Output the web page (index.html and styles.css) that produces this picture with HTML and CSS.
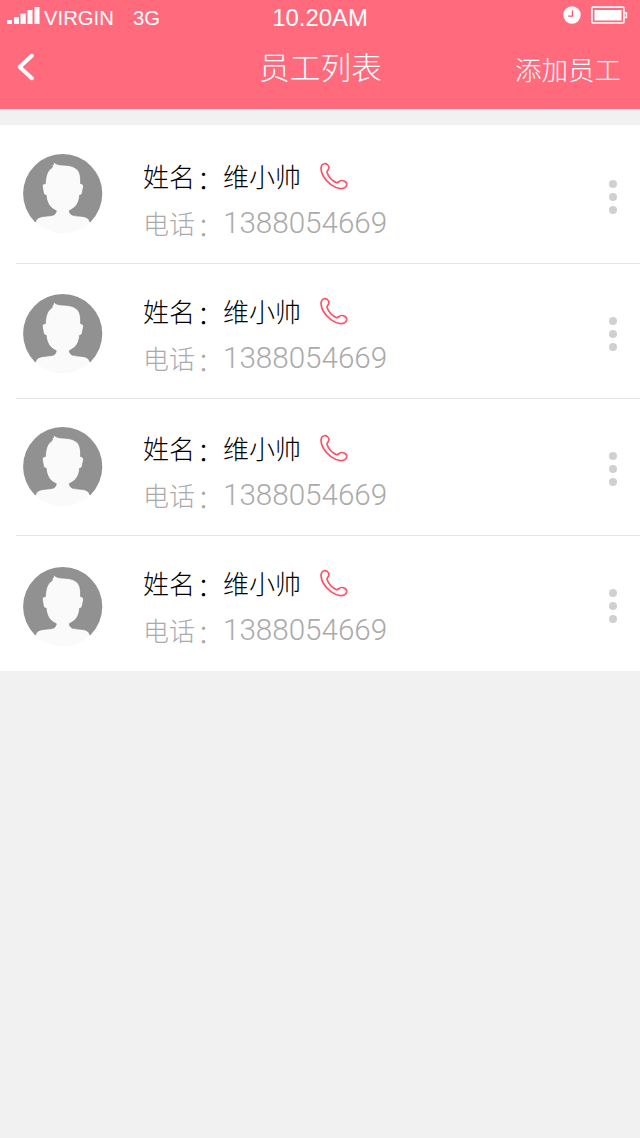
FILE: index.html
```html
<!DOCTYPE html>
<html lang="zh-CN">
<head>
<meta charset="utf-8">
<title>员工列表</title>
<link rel="stylesheet" href="styles.css">
</head>
<body>
<svg class="symbols" width="0" height="0">
  <clipPath id="disc"><circle cx="39.7" cy="39.7" r="39.6"/></clipPath>
  <symbol id="avatar" viewBox="0 0 80 80">
    <circle cx="39.7" cy="39.7" r="39.6" fill="#fafafa"/>
    <path clip-path="url(#disc)" fill="#919191" stroke="#848484" stroke-width=".7" d="M12.500 68L-5 80V-5H85V80L67 68C66 64.500 64 63.300 60 62.500C53 61.700 49 62 47.300 59.500C46.700 58.500 46.300 57.500 46.300 56.700C53.500 53.500 56.300 48 56.600 41.300C58.500 41.300 59.300 40 59.500 37.500L60.500 33C60.700 31 59.500 29.800 57.500 29.500C58 23 57 16.500 52.500 14.200C48 11 42 11.500 37 10.800C34.500 10.500 32 9.500 30.700 7.800L30.200 11L28.700 10.500L29.500 13L27.700 14.800C24.200 17 22.600 23 22.400 29.500C20 29.800 18.900 31 19.400 33L20.200 37.500C20.500 40 21.200 41.300 23.200 41.300C23.500 48 26.500 54 33.200 56.700C33.200 57.500 33 58.500 32.300 59.500C31 62 26 61.700 20 62.500C15.500 63.300 13.500 64.500 12.500 68Z"/>
  </symbol>
  <symbol id="phone" viewBox="0 0 28 28">
    <path fill="none" stroke="#ff5068" stroke-width="1.700" stroke-linejoin="round" d="M4 1.800C6 1 8.700 3 9 5.500C9.100 7.700 6.700 8.500 7 10.500C8.500 14.500 12.500 19 16.500 20.700C18.500 21 19 18.700 21.300 18.500C24.500 18.400 27 20.500 26.800 22.700C26.300 25.300 23.500 26.800 20.500 26.600C14 26 7 20.500 3.500 14.500C1.500 11 .8 7.500 1.200 5C1.600 3.200 2.500 2.200 4 1.800Z"/>
  </symbol>
</svg>
<header class="header">
  <div class="status">
    <div class="carrier">
      <svg class="signal" width="33" height="18" viewBox="0 0 33 18" fill="#fff"><path d="M0 14h5v4H0zM7 11h5v7H7zM13.500 7.500h5.200V18h-5.200zM20.500 4h5v14h-5zM27.500 1h5v17h-5z"/></svg>
      <span class="operator">VIRGIN</span><span class="network">3G</span>
    </div>
    <div class="time">10.20AM</div>
    <div class="indicators">
      <svg width="18" height="18" viewBox="0 0 18 18"><circle cx="9" cy="9" r="8.700" fill="#fff"/><path d="M9.500 4.200v6H5.200" fill="none" stroke="#ff5068" stroke-width="1.200"/></svg>
      <svg width="37" height="18" viewBox="0 0 37 18"><rect x=".9" y="1.200" width="32" height="15.800" rx="1" fill="none" stroke="#fff" stroke-width="1.700"/><path d="M3.500 4h27v10.500h-27z" fill="#fff"/><path d="M33.500 7h2v4.500h-2" fill="none" stroke="#fff" stroke-width="1.400"/></svg>
    </div>
  </div>
  <nav class="nav">
    <a class="back"><svg width="20" height="28" viewBox="0 0 20 28"><path d="M15.800 2.700L3.700 14l12.100 11.300" fill="none" stroke="#fff" stroke-width="3.900" stroke-linecap="round" stroke-linejoin="round"/></svg></a>
    <h1 class="title">员工列表</h1>
    <a class="add">添加员工</a>
  </nav>
</header>
<main class="list">
  <section class="row row-1">
    <svg class="avatar"><use href="#avatar"/></svg>
    <div class="info">
      <div class="name"><span class="label">姓名<span class="colon">：</span></span><span class="person">维小帅</span><svg class="phone"><use href="#phone"/></svg></div>
      <div class="tel"><span class="label">电话<span class="colon">：</span></span><span class="number">1388054669</span></div>
    </div>
    <div class="more"><i></i><i></i><i></i></div>
  </section>
  <section class="row row-2">
    <svg class="avatar"><use href="#avatar"/></svg>
    <div class="info">
      <div class="name"><span class="label">姓名<span class="colon">：</span></span><span class="person">维小帅</span><svg class="phone"><use href="#phone"/></svg></div>
      <div class="tel"><span class="label">电话<span class="colon">：</span></span><span class="number">1388054669</span></div>
    </div>
    <div class="more"><i></i><i></i><i></i></div>
  </section>
  <section class="row row-3">
    <svg class="avatar"><use href="#avatar"/></svg>
    <div class="info">
      <div class="name"><span class="label">姓名<span class="colon">：</span></span><span class="person">维小帅</span><svg class="phone"><use href="#phone"/></svg></div>
      <div class="tel"><span class="label">电话<span class="colon">：</span></span><span class="number">1388054669</span></div>
    </div>
    <div class="more"><i></i><i></i><i></i></div>
  </section>
  <section class="row row-4">
    <svg class="avatar"><use href="#avatar"/></svg>
    <div class="info">
      <div class="name"><span class="label">姓名<span class="colon">：</span></span><span class="person">维小帅</span><svg class="phone"><use href="#phone"/></svg></div>
      <div class="tel"><span class="label">电话<span class="colon">：</span></span><span class="number">1388054669</span></div>
    </div>
    <div class="more"><i></i><i></i><i></i></div>
  </section>
</main>
</body>
</html>
```
FILE: styles.css
```css
* { box-sizing: border-box; }
body {
  margin: 0;
  min-height: 1138px;
  background: #f1f1f1;
  font-family: "Liberation Sans", "Noto Sans CJK SC", sans-serif;
  font-weight: 300;
}
svg { display: block; flex: none; }
.symbols { height: 0; }
.header { height: 109px; background: #ff6b7d; color: #fff; }
.status {
  display: grid;
  grid-template-columns: 1fr auto 1fr;
  height: 36px;
  padding: 0 12px 0 7px;
}
.carrier { display: flex; font-size: 20.300px; line-height: 36px; }
.signal { margin: 6px 4px 0 0; }
.network { margin-left: 19px; }
.time { font-size: 23.900px; line-height: 36px; padding-left: 5px; }
.indicators { display: flex; justify-content: flex-end; gap: 10px; padding-top: 6px; }
.nav {
  display: grid;
  grid-template-columns: 1fr auto 1fr;
  padding: 0 19px 0 16px;
  font-family: "Noto Sans CJK SC", sans-serif;
}
.back { padding-top: 17px; }
.title { margin: 0; padding: 9px 0 0 4px; font-size: 30.700px; line-height: 42px; font-weight: 300; }
.add { padding-top: 12px; text-align: right; font-size: 26.500px; line-height: 42px; }
.list { margin-top: 16px; background: #fff; }
.row {
  display: flex;
  height: 136px;
  padding-left: 23px;
  background: linear-gradient(#e4e4e4, #e4e4e4) 16px 100% / 100% 1px no-repeat;
}
.avatar { width: 80px; height: 80px; margin-top: var(--avatar-top); }
.info { margin: var(--info-top) 0 0 40px; flex: 1; }
.name, .tel { display: flex; font-family: "Noto Sans CJK SC", sans-serif; font-size: 26px; height: 47px; line-height: 38px; }
.name { color: #000; }
.tel { color: #aaa; }
.label { display: flex; width: 80px; }
.colon { width: 26px; padding-top: 2px; margin-left: 2px; }
.phone { width: 28px; height: 28px; margin: 5px 0 0 19px; }
.number { font-family: Roboto, "Liberation Sans", sans-serif; font-weight: 300; font-size: 29.600px; }
.more { width: 8px; margin: var(--more-top) 23px 0 0; display: flex; flex-direction: column; gap: 5px; }
.more i { width: 8px; height: 8px; border-radius: 50%; background: #d0d0d0; }
.row-1 { height: 139px; --avatar-top: 29px; --info-top: 32px; --more-top: 55px; }
.row-2 { height: 135px; --avatar-top: 30px; --info-top: 28px; --more-top: 53px; }
.row-3 { height: 137px; --avatar-top: 28px; --info-top: 30px; --more-top: 53px; }
.row-4 { height: 135px; --avatar-top: 31px; --info-top: 28px; --more-top: 53px; background: none; }
```
